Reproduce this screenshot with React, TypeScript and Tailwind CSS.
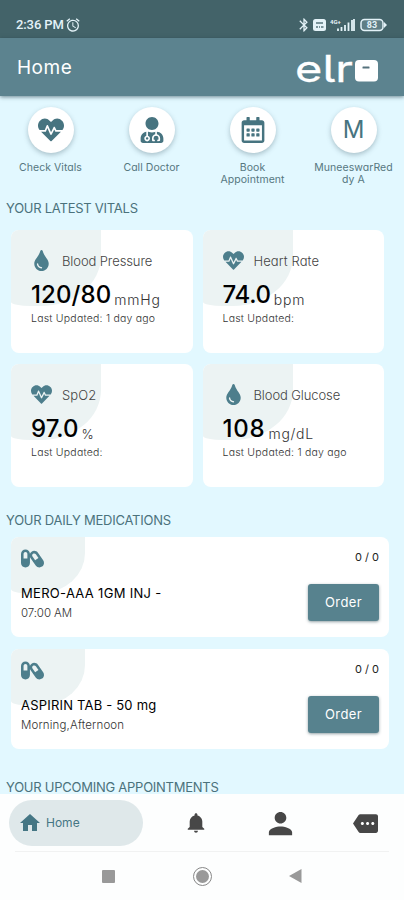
import type { IconType } from "react-icons";
import { FaCapsules, FaHeartbeat, FaRegCalendarAlt, FaTint, FaUserMd } from "react-icons/fa";
import { IoMdNotifications, IoMdPerson } from "react-icons/io";
import { MdAlarm, MdBluetooth, MdHome, MdMore } from "react-icons/md";

interface Vital {
  icon: IconType;
  name: string;
  nameClass: string;
  value: string;
  valueClass: string;
  unit: string;
  unitClass: string;
  updated: string;
}

const VITALS: Vital[] = [
  { icon: FaTint,      name: "Blood Pressure", nameClass: "tracking-[-0.1px]", value: "120/80", valueClass: "tracking-[0.1px]", unit: "mmHg",  unitClass: "text-[14px] tracking-[0.8px]",  updated: "1 day ago" },
  { icon: FaHeartbeat, name: "Heart Rate",     nameClass: "tracking-[0.1px]",  value: "74.0",   valueClass: "tracking-[-0.3px]",  unit: "bpm",   unitClass: "text-[14px] tracking-[0.8px]",  updated: "" },
  { icon: FaHeartbeat, name: "SpO2",           nameClass: "tracking-[0.1px]",  value: "97.0",   valueClass: "tracking-[0px]",     unit: "%",     unitClass: "text-[13px]",                   updated: "" },
  { icon: FaTint,      name: "Blood Glucose",  nameClass: "tracking-[-0.1px]", value: "108",    valueClass: "tracking-[0.8px]",   unit: "mg/dL", unitClass: "text-[14px] tracking-[0.7px]",  updated: "1 day ago" },
];

const MEDICATIONS = [
  { name: "MERO-AAA 1GM INJ -",  nameClass: "tracking-[0.3px]", time: "07:00 AM",          timeClass: "tracking-[-0.1px]" },
  { name: "ASPIRIN TAB - 50 mg", nameClass: "tracking-[0.2px]", time: "Morning,Afternoon", timeClass: "tracking-[0.15px]" },
];

function StatusBar() {
  return (
    <div className="flex h-[38px] shrink-0 items-center justify-between bg-[#436369] pl-4 pr-[17px] pt-[11px] text-[#e3f2f8]">
      <div className="flex items-center gap-[1px]">
        <span className="font-[Roboto,sans-serif] text-[13px] font-medium leading-none tracking-[-0.1px]">2:36 PM</span>
        <MdAlarm className="size-4" />
      </div>
      <div className="flex items-center">
        <MdBluetooth className="mr-[1px] size-[16px]" />
        <svg className="mr-[4px]" width="13" height="12" viewBox="0 0 13 12">
          <rect width="13" height="12" rx="2.5" fill="currentColor" />
          <path d="M3 4h7M3 8h2M6 8h1M8 8h2.5" stroke="#55747b" strokeWidth="1.6" />
        </svg>
        <svg className="mr-[5px]" width="25" height="14" viewBox="0 0 25 14">
          <text x="0" y="6" fontSize="6" fontWeight="700" fill="currentColor" fontFamily="Roboto, sans-serif">4G+</text>
          <path d="M8 13v-2.500M11.500 13V9M15 13V7M18.500 13V4.500M22 13V2M24 13V1" stroke="currentColor" strokeWidth="1.800" />
        </svg>
        <svg width="27" height="14" viewBox="0 0 27 14">
          <rect x="1" y="1.500" width="22" height="11" rx="3.500" fill="#5f7e85" stroke="currentColor" strokeWidth="1.500" />
          <path d="M24 4l3 3-3 3z" fill="currentColor" />
          <text x="12" y="10.300" textAnchor="middle" fontSize="9" fontWeight="700" fill="currentColor" fontFamily="Roboto, sans-serif">83</text>
        </svg>
      </div>
    </div>
  );
}

function AppBar() {
  return (
    <header className="z-10 flex h-[58px] shrink-0 items-center justify-between bg-[#5c838f] pl-[17px] pr-[25px] text-white shadow-[0_1px_4px_rgba(30,60,70,0.6)]">
      <h1 className="text-[19px] leading-none tracking-[0.5px]">Home</h1>
      {/* Wordmark: wide letters and a solid rounded square for the last one */}
      <svg width="84" height="56" viewBox="0 0 84 56" className="[font-feature-settings:'cv05']">
        <text x="0" y="42.500" fontSize="37" fontWeight="400" fill="white" stroke="white" strokeWidth="0.300" textLength="58" lengthAdjust="spacingAndGlyphs">elr</text>
        <rect x="60" y="21" width="23" height="21.500" rx="4" fill="white" />
        <rect x="67.500" y="27.500" width="7" height="2" rx="0.500" fill="#56727d" />
      </svg>
    </header>
  );
}

function QuickAction({ icon: Icon, iconClass, label }: { icon?: IconType; iconClass?: string; label: string[] }) {
  return (
    <div className="flex w-[101px] flex-col items-center">
      <div className="flex size-[46px] items-center justify-center rounded-full bg-white text-[#477480] shadow-[0_2px_5px_rgba(60,90,100,0.35)]">
        {Icon ? <Icon className={iconClass} /> : <span className="text-[24px] leading-none">M</span>}
      </div>
      <p className="mt-[9px] whitespace-nowrap text-center text-[10.5px] leading-[11.5px] tracking-[0.05px] text-[#56777f]">
        {label.map((line) => (
          <span key={line} className="block">{line}</span>
        ))}
      </p>
    </div>
  );
}

function SectionTitle({ children }: { children: string }) {
  return <h2 className="pl-[6px] text-[13px] leading-[14px] tracking-[-0.25px] text-[#4b727c]">{children}</h2>;
}

function VitalCard({ vital }: { vital: Vital }) {
  const Icon = vital.icon;
  return (
    <div className="relative h-[123px] overflow-hidden rounded-lg bg-white pl-[20px]">
      <div className="absolute left-0 top-0 h-[76px] w-[90px] rounded-br-[60px_50px] rounded-bl-[20px_4px] bg-[#ecf3f3]" />
      <div className="relative">
        <div className="flex h-[46px] items-end">
          <div className="flex h-[31px] w-[31px] items-center">
            <div className="flex w-[21px] justify-center text-[#4d7e8c]">
              <Icon className="size-[21px]" />
            </div>
          </div>
          <span className={`flex h-[29px] items-center text-[13px] font-light text-[#444] ${vital.nameClass}`}>{vital.name}</span>
        </div>
        <div className="flex h-[36px] items-baseline gap-[3px]">
          <span className={`text-[24px] font-medium leading-[38px] text-black ${vital.valueClass}`}>{vital.value}</span>
          <span className={`relative top-[2px] font-light text-[#333] ${vital.unitClass}`}>{vital.unit}</span>
        </div>
        <p className="text-[10.5px] font-light leading-[14px] tracking-[0.22px] text-[#333]">Last Updated: {vital.updated}</p>
      </div>
    </div>
  );
}

interface MedicationProps {
  name: string;
  nameClass: string;
  time: string;
  timeClass: string;
}

function MedicationCard({ name, nameClass, time, timeClass }: MedicationProps) {
  return (
    <div className="relative flex h-[100px] justify-between overflow-hidden rounded-lg bg-white px-[10px]">
      <div className="absolute left-0 top-0 h-[56px] w-[74px] rounded-br-[44px_40px] rounded-bl-[12px_4px] bg-[#ecf3f3]" />
      <div className="relative pt-[10px]">
        <FaCapsules className="size-[23px] text-[#4d7e8c]" />
        <p className={`mt-[14px] text-[13px] leading-[18px] text-black ${nameClass}`}>{name}</p>
        <p className={`mt-[3px] text-[11.5px] font-light leading-[16px] text-[#333] ${timeClass}`}>{time}</p>
      </div>
      <div className="relative flex flex-col items-end pt-[13px]">
        <span className="text-[11px] leading-[14px] text-[#222]">0 / 0</span>
        <button className="mt-[20px] h-[37px] w-[71px] rounded-[3px] bg-[#57828e] text-[13px] tracking-[0.4px] text-white shadow-[0_1px_3px_rgba(40,70,80,0.5)]">
          Order
        </button>
      </div>
    </div>
  );
}

function BottomNav() {
  return (
    <nav className="h-[106px] shrink-0 bg-[#fdfefe] px-[9px] pt-[6px]">
      <div className="flex h-[46px] items-center text-[#474747]">
        <div className="flex h-[46px] w-[134px] items-center gap-[4px] rounded-full bg-[#dfe8ea] pl-[9px] text-[#457684]">
          <MdHome className="size-[24px]" />
          <span className="text-[12px]">Home</span>
        </div>
        <IoMdNotifications className="ml-[41px] size-[24px]" />
        <IoMdPerson className="ml-[57px] size-[31px]" />
        <MdMore className="ml-[57px] size-[25px]" />
      </div>
      <div className="mx-[6px] mt-[5px] h-px bg-[#f1f2f2]" />
      <div className="flex h-[48px] items-center text-[#999]">
        <div className="ml-[93px] size-[13px] rounded-[1px] bg-[#999]" />
        <div className="ml-[78px] flex size-[19px] items-center justify-center rounded-full border border-[#888]">
          <div className="size-[13px] rounded-full bg-[#999]" />
        </div>
        <svg className="ml-[77px]" width="13" height="14" viewBox="0 0 13 14">
          <path d="M0 7L12.500 0v14z" fill="currentColor" />
        </svg>
      </div>
    </nav>
  );
}

export default function App() {
  return (
    <div className="flex h-[900px] w-[404px] flex-col overflow-hidden bg-[#e2f8ff] font-[Inter,sans-serif] [font-feature-settings:'cv11']">
      <StatusBar />
      <AppBar />
      <main className="min-h-0 flex-1 overflow-hidden pt-[11px]">
        <div className="flex h-[94px]">
          <QuickAction icon={FaHeartbeat} iconClass="size-[26px]" label={["Check Vitals"]} />
          <QuickAction icon={FaUserMd} iconClass="size-[26px]" label={["Call Doctor"]} />
          <QuickAction icon={FaRegCalendarAlt} iconClass="size-[26px]" label={["Book", "Appointment"]} />
          <QuickAction label={["MuneeswarRed", "dy A"]} />
        </div>

        <SectionTitle>YOUR LATEST VITALS</SectionTitle>
        <div className="ml-[11px] mt-[15px] grid w-[373px] grid-cols-2 gap-x-[10px] gap-y-[11px]">
          {VITALS.map((vital) => (
            <VitalCard key={vital.name} vital={vital} />
          ))}
        </div>

        <div className="mt-[26px]">
          <SectionTitle>YOUR DAILY MEDICATIONS</SectionTitle>
        </div>
        <div className="ml-[11px] mt-[10px] flex w-[378px] flex-col gap-3">
          {MEDICATIONS.map((med) => (
            <MedicationCard key={med.name} {...med} />
          ))}
        </div>

        <div className="mt-[31px]">
          <SectionTitle>YOUR UPCOMING APPOINTMENTS</SectionTitle>
        </div>
      </main>
      <BottomNav />
    </div>
  );
}
